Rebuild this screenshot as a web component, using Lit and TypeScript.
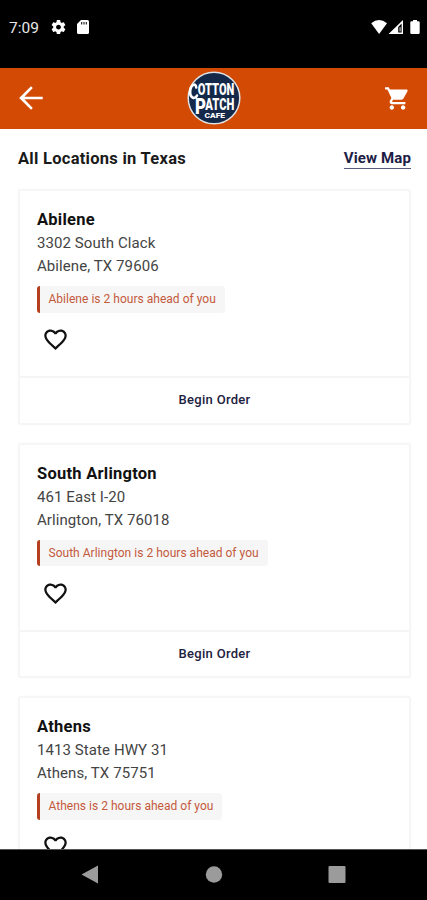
import { LitElement, html, css, svg } from "lit";
import { customElement, property } from "lit/decorators.js";

interface Store {
  name: string;
  street: string;
  city: string;
}

const STORES: Store[] = [
  { name: "Abilene", street: "3302 South Clack", city: "Abilene, TX 79606" },
  { name: "South Arlington", street: "461 East I-20", city: "Arlington, TX 76018" },
  { name: "Athens", street: "1413 State HWY 31", city: "Athens, TX 75751" },
];

@customElement("status-bar")
class StatusBar extends LitElement {
  static styles = css`
    :host {
      display: flex;
      box-sizing: border-box;
      height: 67.5px;
      flex: none;
      padding: 18px 6px 0 9px;
      background: #000;
      color: #e8e8e8;
    }
    .time {
      font-size: 15.5px;
      line-height: 20px;
      width: 41px;
    }
    .right { margin-left: auto; }
    svg { display: block; fill: #fff; }
  `;
  render() {
    return html`
      <span class="time">7:09</span>
      <svg width="46" height="20" viewBox="0 -1 46 20">
        <g transform="translate(0.1 -0.3) scale(.7)">
          <path d="M19.43 12.98c.04-.32.07-.64.07-.98s-.03-.66-.07-.98l2.11-1.65c.19-.15.24-.42.12-.64l-2-3.46c-.12-.22-.39-.3-.61-.22l-2.49 1c-.52-.4-1.08-.73-1.69-.98l-.38-2.65C14.46 2.18 14.25 2 14 2h-4c-.25 0-.46.18-.49.42l-.38 2.65c-.61.25-1.17.59-1.69.98l-2.49-1c-.23-.09-.49 0-.61.22l-2 3.46c-.13.22-.07.49.12.64l2.11 1.65c-.04.32-.07.65-.07.98s.03.66.07.98l-2.11 1.65c-.19.15-.24.42-.12.64l2 3.46c.12.22.39.3.61.22l2.49-1c.52.4 1.08.73 1.69.98l.38 2.65c.03.24.24.42.49.42h4c.25 0 .46-.18.49-.42l.38-2.65c.61-.25 1.17-.59 1.69-.98l2.49 1c.23.09.49 0 .61-.22l2-3.46c.12-.22.07-.49-.12-.64l-2.11-1.65zM12 15.5c-1.93 0-3.5-1.57-3.5-3.5s1.57-3.5 3.5-3.5 3.5 1.57 3.5 3.5-1.57 3.5-3.5 3.5z"/>
        </g>
        <path fill-rule="evenodd" d="M31 1h6.5q1.500 0 1.500 1.500v11q0 1.500-1.500 1.500h-9q-1.500 0-1.500-1.500V5zM31.200 3v2.600h1V3zM33.500 3v2.600h1V3zM35.800 3v2.600h1V3z"/>
      </svg>
      <svg class="right" width="50" height="20" viewBox="0 0 50 20">
        <path d="M.2 5.200Q8-1.300 16 5.200L8.100 16z"/>
        <path fill-rule="evenodd" d="M32 2v14H17.500zM30.600 5.500l-3.400 3.400v5.600h3.400z"/>
        <path d="M28.600 9.300h.9v4.200h-.9z"/>
        <path d="M40.500 3.200H42V2h4v1.200h1.500q1.200 0 1.200 1.200v10.400q0 1.200-1.200 1.200h-7q-1.200 0-1.200-1.200V4.400q0-1.200 1.200-1.200z"/>
      </svg>
    `;
  }
}

@customElement("brand-logo")
class BrandLogo extends LitElement {
  static styles = css`
    :host { display: block; width: 54px; height: 54px; }
    svg { display: block; }
    .ring { fill: #14294a; stroke: #dfe3e6; stroke-width: 1.5; }
    .word { fill: #fff; font-family: Roboto, "Liberation Sans", sans-serif; font-weight: 900; }
    .swash { fill: none; stroke: #fff; stroke-width: 2.6; stroke-linecap: round; }
  `;
  render() {
    return html`
      <svg width="54" height="54" viewBox="0 0 54 54">
        <circle class="ring" cx="27" cy="27" r="25.8" />
        ${svg`
          <path class="swash" d="M9.200 16.500C9 11.500 3.800 13.500 3.200 20 2.600 27 8 29 10 24.500"/>
          <text class="word" x="10.800" y="24.300" font-size="17" textLength="36.500" lengthAdjust="spacingAndGlyphs">OTTON</text>
          <text class="word" x="8" y="42.500" font-size="21.500" textLength="11" lengthAdjust="spacingAndGlyphs">P</text>
          <text class="word" x="18.300" y="39" font-size="17" textLength="29" lengthAdjust="spacingAndGlyphs">ATCH</text>
          <text class="word" x="17.500" y="46.700" font-size="7" textLength="20.500" lengthAdjust="spacingAndGlyphs">CAFE</text>`}
      </svg>
    `;
  }
}

@customElement("app-header")
class AppHeader extends LitElement {
  static styles = css`
    :host {
      display: grid;
      grid-template-columns: 1fr auto 1fr;
      align-items: center;
      box-sizing: border-box;
      height: 61px;
      flex: none;
      padding: 0 16px 0 14px;
      background: #d24a04;
    }
    svg { display: block; fill: #fff; }
    .back { margin-left: -1px; }
    .cart { justify-self: end; }
    brand-logo { margin-left: 3px; }
  `;
  render() {
    return html`
      <svg class="back" width="36" height="36" viewBox="0 0 24 24">
        <path d="M19.800 11.100H7.600l5.600-5.690L12 4.200l-7.900 7.800 7.900 7.800 1.200-1.210L7.600 12.900h12.200z"/>
      </svg>
      <brand-logo></brand-logo>
      <svg class="cart" width="27" height="27" viewBox="0 0 24 24">
        <path d="M7 18c-1.100 0-1.990.9-1.990 2S5.900 22 7 22s2-.9 2-2-.9-2-2-2zM1 2v2h2l3.600 7.590-1.350 2.450c-.16.28-.25.61-.25.96 0 1.100.9 2 2 2h12v-2H7.420c-.14 0-.25-.11-.25-.25l.03-.12.9-1.630h7.450c.75 0 1.410-.41 1.750-1.030l3.580-6.490c.08-.14.12-.31.12-.48 0-.55-.45-1-1-1H5.210l-.94-2H1zm16 16c-1.100 0-1.990.9-1.990 2s.89 2 1.990 2 2-.9 2-2-.9-2-2-2z"/>
      </svg>
    `;
  }
}

@customElement("store-card")
class StoreCard extends LitElement {
  @property({ attribute: false }) store!: Store;

  static styles = css`
    :host {
      display: flex;
      flex-direction: column;
      box-sizing: border-box;
      height: 235.5px;
      flex: none;
      border: 2px solid #f6f6f6;
      border-radius: 3px;
      background: #fff;
      box-shadow: 0 0 3px #f9f9f9;
    }
    .body {
      flex: 1;
      display: flex;
      flex-direction: column;
      align-items: flex-start;
      padding: 17px 17px 0;
    }
    .name {
      font-weight: 700;
      font-size: 16.5px;
      line-height: 24.3px;
      letter-spacing: .25px;
      color: #111;
    }
    .line {
      font-size: 15px;
      line-height: 22.7px;
      letter-spacing: .08px;
      color: #444;
    }
    .notice {
      box-sizing: border-box;
      height: 26.5px;
      margin-top: 8.7px;
      padding: 0 9px 0 8.5px;
      border-left: 3.5px solid #b5401f;
      border-radius: 3px;
      background: #f6f6f6;
      font-size: 12px;
      line-height: 26px;
      letter-spacing: .02px;
      color: #c45a3c;
    }
    .heart {
      display: block;
      margin: 13.5px 0 0 5px;
      fill: #111;
    }
    .action {
      height: 44.5px;
      flex: none;
      border-top: 2px solid #f5f5f5;
      text-align: center;
      font-weight: 500;
      font-size: 13px;
      line-height: 44px;
      letter-spacing: .3px;
      color: #1c2140;
    }
  `;
  render() {
    const { name, street, city } = this.store;
    return html`
      <div class="body">
        <div class="name">${name}</div>
        <div class="line">${street}</div>
        <div class="line">${city}</div>
        <div class="notice">${name} is 2 hours ahead of you</div>
        <svg class="heart" width="27" height="27" viewBox="0 0 24 24">
          <path d="M16.500 3c-1.740 0-3.410.81-4.500 2.090C10.910 3.810 9.240 3 7.500 3 4.420 3 2 5.420 2 8.500c0 3.780 3.400 6.860 8.550 11.540L12 21.350l1.450-1.320C18.600 15.360 22 12.280 22 8.500 22 5.420 19.580 3 16.500 3zm-4.400 15.550l-.1.100-.1-.1C7.140 14.240 4 11.390 4 8.500 4 6.500 5.500 5 7.500 5c1.540 0 3.040.99 3.570 2.360h1.870C13.460 5.990 14.960 5 16.500 5c2 0 3.500 1.500 3.500 3.500 0 2.890-3.140 5.740-7.900 10.050z"/>
        </svg>
      </div>
      <div class="action">Begin Order</div>
    `;
  }
}

@customElement("nav-bar")
class NavBar extends LitElement {
  static styles = css`
    :host {
      display: flex;
      justify-content: space-between;
      align-items: center;
      box-sizing: border-box;
      height: 51.5px;
      flex: none;
      padding: 0 81.5px 0 81px;
      background: #000;
      border-top: 1px solid #555;
    }
    svg { display: block; fill: #9b9b9b; }
  `;
  render() {
    return html`
      <svg width="18" height="20"><path d="M.5 9.500 17 .5v18z"/></svg>
      <svg width="20" height="18"><circle cx="11" cy="8.500" r="8.200"/></svg>
      <svg width="18" height="18"><rect x=".5" y="0" width="17" height="17" rx="1"/></svg>
    `;
  }
}

@customElement("app-root")
class AppRoot extends LitElement {
  static styles = css`
    :host {
      display: flex;
      flex-direction: column;
      height: 900px;
      overflow: hidden;
      background: #fff;
      font-family: Roboto, "Liberation Sans", sans-serif;
    }
    .content {
      flex: 1;
      min-height: 0;
      overflow: hidden;
      box-sizing: border-box;
      padding: 20px 16px 0 18px;
    }
    .heading {
      display: flex;
      justify-content: space-between;
      align-items: flex-start;
      height: 40.5px;
    }
    .title {
      font-weight: 700;
      font-size: 16.5px;
      line-height: 20px;
      letter-spacing: .27px;
      color: #1a1a1a;
    }
    .map {
      font-weight: 700;
      font-size: 15px;
      line-height: 19.5px;
      letter-spacing: .12px;
      color: #1c2045;
      border-bottom: 1.5px solid #555b7d;
    }
    .cards {
      display: flex;
      flex-direction: column;
      gap: 18px;
    }
  `;
  render() {
    return html`
      <status-bar></status-bar>
      <app-header></app-header>
      <div class="content">
        <div class="heading">
          <span class="title">All Locations in Texas</span>
          <span class="map">View Map</span>
        </div>
        <div class="cards">
          ${STORES.map((s) => html`<store-card .store=${s}></store-card>`)}
        </div>
      </div>
      <nav-bar></nav-bar>
    `;
  }
}
